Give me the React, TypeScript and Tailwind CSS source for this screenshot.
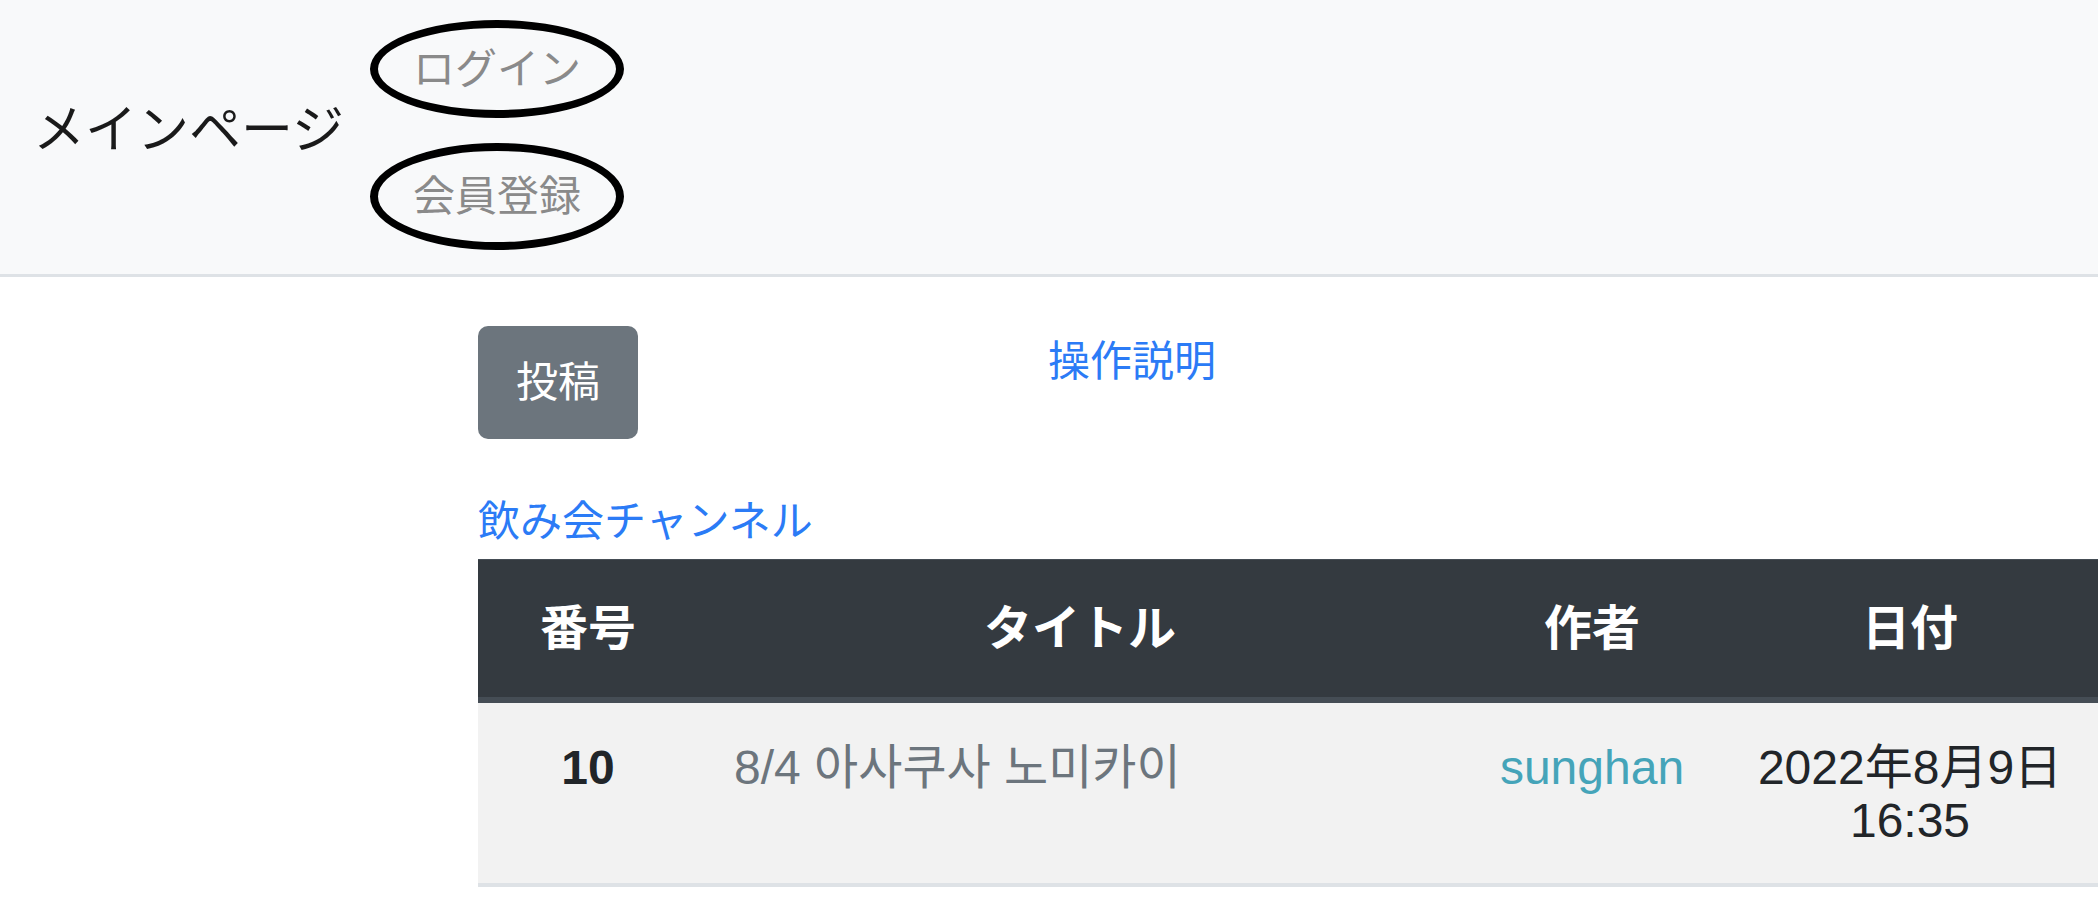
export default function App() {
  return (
    <div className="min-h-screen bg-white font-['Liberation_Sans','Noto_Sans_CJK_JP',sans-serif] text-[#212529]">
      <header className="h-[277px] bg-[#f8f9fa] border-b-[3px] border-[#dee2e6] flex items-start">
        <a className="ml-[33px] mt-[100px] text-[52px] leading-[60px] text-[#1a1a1a] whitespace-nowrap">
          メインページ
        </a>
        <nav className="ml-[26px] pt-[20px] flex flex-col gap-[25px]">
          <a className="w-[254px] h-[98px] rounded-[50%] border-[8px] border-black flex items-center justify-center text-[42px] text-[#8a8a8a]">
            ログイン
          </a>
          <a className="w-[254px] h-[107px] rounded-[50%] border-[8px] border-black flex items-center justify-center text-[42px] text-[#8a8a8a]">
            会員登録
          </a>
        </nav>
      </header>

      <main className="pl-[478px] pt-[49px]">
        <div className="flex items-start">
          <button
            type="button"
            className="w-[160px] h-[113px] rounded-[10px] bg-[#6c757d] text-white text-[42px] flex items-center justify-center"
          >
            投稿
          </button>
          <a className="ml-[410px] mt-[4px] text-[42px] leading-[63px] text-[#2b7bf6]">操作説明</a>
        </div>

        <a className="block mt-[51px] text-[42px] leading-[63px] text-[#2b7bf6]">飲み会チャンネル</a>

        <table className="mt-[6px] table-fixed w-[1620px] border-separate border-spacing-0">
          <colgroup>
            <col className="w-[220px]" />
            <col className="w-[764px]" />
            <col className="w-[260px]" />
            <col className="w-[376px]" />
          </colgroup>
          <thead>
            <tr className="bg-[#343a40] text-white text-[48px] leading-[53px] font-bold">
              <th className="border-t border-b-[6px] border-[#454d55] px-[36px] py-[42px] text-center">番号</th>
              <th className="border-t border-b-[6px] border-[#454d55] px-[36px] py-[42px] text-center">タイトル</th>
              <th className="border-t border-b-[6px] border-[#454d55] px-[36px] py-[42px] text-center">作者</th>
              <th className="border-t border-b-[6px] border-[#454d55] px-[36px] py-[42px] text-center">日付</th>
            </tr>
          </thead>
          <tbody>
            <tr className="bg-[#f2f2f2] text-[48px] leading-[53px]">
              <td className="border-b-4 border-[#dee2e6] px-[36px] pt-[38px] pb-[36px] align-top text-center font-bold">
                10
              </td>
              <td className="border-b-4 border-[#dee2e6] px-[36px] pt-[38px] pb-[36px] align-top text-left text-[#6c757d] whitespace-nowrap font-['Liberation_Sans','Noto_Sans_CJK_KR',sans-serif]">
                8/4 아사쿠사 노미카이
              </td>
              <td className="border-b-4 border-[#dee2e6] px-[36px] pt-[38px] pb-[36px] align-top text-center text-[#45a4b9]">
                sunghan
              </td>
              <td className="border-b-4 border-[#dee2e6] px-[20px] pt-[38px] pb-[36px] align-top text-center whitespace-nowrap">
                2022年8月9日
                <br />
                16:35
              </td>
            </tr>
          </tbody>
        </table>
      </main>
    </div>
  )
}
